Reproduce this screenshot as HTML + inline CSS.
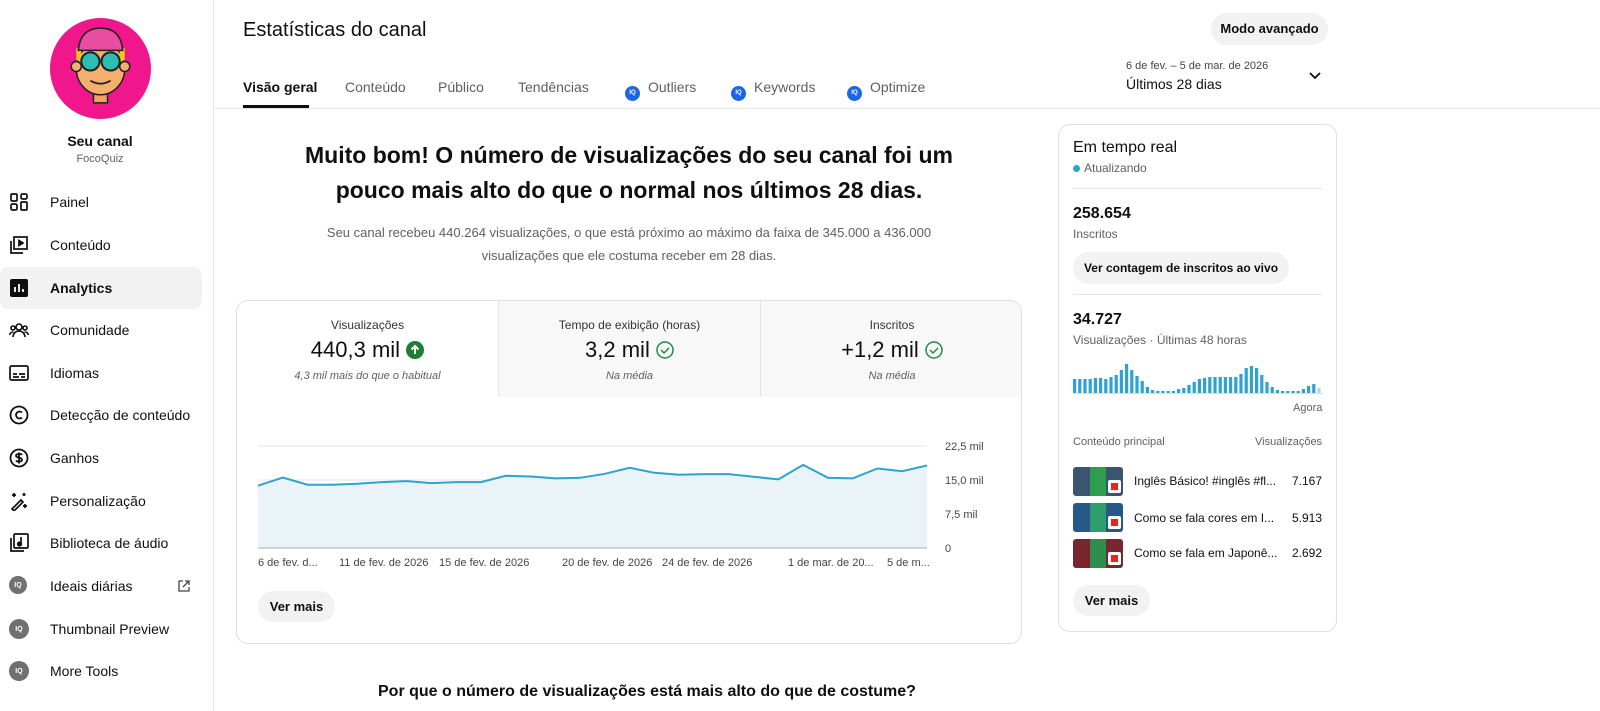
<!DOCTYPE html>
<html><head><meta charset="utf-8"><style>
*{margin:0;padding:0;box-sizing:border-box}
body{width:1600px;height:711px;overflow:hidden;background:#fff;font-family:"Liberation Sans",Arial,sans-serif;color:#0f0f0f;position:relative}
.abs{position:absolute}
.side{left:0;top:0;width:214px;height:711px;border-right:1px solid #e5e5e5}
.nav{position:absolute;left:0;width:202px;height:42px;display:flex;align-items:center;font-size:14px}
.nav .ic{position:absolute;left:9px;top:11px;width:20px;height:20px}
.nav span{position:absolute;left:50px;top:13px}
.iq{width:18px;height:18px;border-radius:50%;background:#707070;color:#fff;font-size:7px;font-weight:bold;display:flex;align-items:center;justify-content:center}
.tab{position:absolute;top:79px;font-size:14px;color:#606060}
.bq{display:inline-block;width:15px;height:15px;border-radius:50%;background:#1a66e8;color:#fff;font-size:6px;font-weight:bold;text-align:center;line-height:15px;vertical-align:-2px;margin-right:8px}
.btn{position:absolute;background:#f2f2f2;border-radius:18px;font-size:13px;font-weight:bold;color:#0f0f0f;text-align:center}
.m{position:absolute;top:0;height:96px;text-align:center}
.m .l{font-size:12px;color:#333;margin-top:17px}
.m .v{font-size:22px;margin-top:5px}
.m .s{font-size:11px;color:#606060;font-style:italic;margin-top:7px}
.small{font-size:12px;color:#606060}
</style></head><body>
<div class="abs side">
  <svg class="abs" style="left:50px;top:18px" width="101" height="101" viewBox="0 0 100 100">
    <circle cx="50" cy="50" r="50" fill="#f0168c"/>
    <rect x="43" y="70" width="14" height="14" fill="#f5a05a" stroke="#222" stroke-width="1.5"/>
    <ellipse cx="50" cy="50" rx="24" ry="26" fill="#f5b06f" stroke="#222" stroke-width="1.5"/>
    <circle cx="26" cy="48" r="5" fill="#f5b06f" stroke="#222" stroke-width="1.5"/>
    <circle cx="74" cy="48" r="5" fill="#f5b06f" stroke="#222" stroke-width="1.5"/>
    <rect x="26" y="30" width="5" height="12" fill="#f7c51a"/>
    <rect x="69" y="30" width="5" height="12" fill="#f7c51a"/>
    <path d="M28 32 Q30 10 50 10 Q70 10 72 32 Z" fill="#e94ca0" stroke="#222" stroke-width="1.5"/>
    <circle cx="40" cy="43" r="9" fill="#2bbfb3" stroke="#222" stroke-width="2"/>
    <circle cx="60" cy="43" r="9" fill="#2bbfb3" stroke="#222" stroke-width="2"/>
    <path d="M40 62 Q50 68 60 62" fill="none" stroke="#222" stroke-width="1.8"/>
  </svg>
  <div class="abs" style="left:0;width:200px;top:133px;text-align:center;font-size:14px;font-weight:bold">Seu canal</div>
  <div class="abs" style="left:0;width:200px;top:153px;text-align:center;font-size:11px;color:#606060">FocoQuiz</div>

  <div class="nav" style="top:181px"><svg class="ic" viewBox="0 0 20 20" fill="none" stroke="#0f0f0f" stroke-width="1.7"><rect x="2" y="2" width="6" height="7" rx="1"/><rect x="12" y="2" width="6" height="5" rx="1.5"/><rect x="2" y="12" width="6" height="6" rx="1.5"/><rect x="12" y="10" width="6" height="8" rx="1"/></svg><span>Painel</span></div>
  <div class="nav" style="top:224px"><svg class="ic" viewBox="0 0 20 20" fill="none" stroke="#0f0f0f" stroke-width="1.7"><rect x="5" y="2" width="13" height="12"/><path d="M2 6v12h12"/><path d="M10 5.5v5l4-2.5z" fill="#0f0f0f"/></svg><span>Conteúdo</span></div>
  <div class="nav" style="top:267px;background:#f2f2f2;border-radius:8px"><svg class="ic" viewBox="0 0 20 20"><rect x="1" y="1" width="18" height="18" rx="2" fill="#0f0f0f"/><path d="M6 14V9M10 14V6M14 14v-3" stroke="#fff" stroke-width="1.8"/></svg><span style="font-weight:bold">Analytics</span></div>
  <div class="nav" style="top:309px"><svg class="ic" viewBox="0 0 20 20" fill="none" stroke="#0f0f0f" stroke-width="1.6"><circle cx="10" cy="7" r="3"/><circle cx="4" cy="8" r="2"/><circle cx="16" cy="8" r="2"/><path d="M4 17a6 6 0 0 1 12 0M0.5 15a4 4 0 0 1 4-3M19.5 15a4 4 0 0 0-4-3"/></svg><span>Comunidade</span></div>
  <div class="nav" style="top:352px"><svg class="ic" viewBox="0 0 20 20" fill="none" stroke="#0f0f0f" stroke-width="1.7"><rect x="1" y="3" width="18" height="14" rx="1.5"/><path d="M4 11h4M10 11h6M4 14h6M12 14h4"/></svg><span>Idiomas</span></div>
  <div class="nav" style="top:394px"><svg class="ic" viewBox="0 0 20 20" fill="none" stroke="#0f0f0f" stroke-width="1.8"><circle cx="10" cy="10" r="8.5"/><path d="M13 7.5a3.5 3.5 0 1 0 0 5"/></svg><span>Detecção de conteúdo</span></div>
  <div class="nav" style="top:437px"><svg class="ic" viewBox="0 0 20 20" fill="none" stroke="#0f0f0f" stroke-width="1.8"><circle cx="10" cy="10" r="8.5"/><path d="M13 7c-1-1.5-6-1.5-6 .8s6 1.4 6 4c0 2.3-5 2.3-6 .7M10 4.5v11"/></svg><span>Ganhos</span></div>
  <div class="nav" style="top:480px"><svg class="ic" viewBox="0 0 20 20" fill="none" stroke="#0f0f0f" stroke-width="1.7"><path d="M3 18l9-9 2 2-9 9z"/><path d="M5 2v4M3 4h4M15 2v3M13.5 3.5h3M16 13v4M14 15h4"/></svg><span>Personalização</span></div>
  <div class="nav" style="top:522px"><svg class="ic" viewBox="0 0 20 20" fill="none" stroke="#0f0f0f" stroke-width="1.7"><rect x="5" y="1" width="14" height="14" rx="1"/><path d="M2 5v13h13"/><path d="M12 4v7"/><circle cx="10.5" cy="11" r="1.8" fill="#0f0f0f"/></svg><span>Biblioteca de áudio</span></div>
  <div class="nav" style="top:565px"><div class="ic iq" style="width:18px;height:18px">IQ</div><span>Ideais diárias</span><svg class="abs" style="left:177px;top:14px" width="14" height="14" viewBox="0 0 14 14" fill="none" stroke="#444" stroke-width="1.3"><path d="M6 2H2v10h10V8M8 2h4v4M12 2L6 8"/></svg></div>
  <div class="nav" style="top:608px"><div class="ic iq">IQ</div><span>Thumbnail Preview</span></div>
  <div class="nav" style="top:650px"><div class="ic iq">IQ</div><span>More Tools</span></div>
</div>

<div class="abs" style="left:243px;top:19px;font-size:20px">Estatísticas do canal</div>
<div class="btn" style="left:1211px;top:13px;width:117px;height:32px;line-height:32px">Modo avançado</div>
<div class="tab" style="left:243px;color:#0f0f0f;font-weight:bold">Visão geral</div>
<div class="abs" style="left:243px;top:105px;width:66px;height:3px;background:#0f0f0f"></div>
<div class="tab" style="left:345px">Conteúdo</div>
<div class="tab" style="left:438px">Público</div>
<div class="tab" style="left:518px">Tendências</div>
<div class="tab" style="left:625px"><span class="bq">IQ</span>Outliers</div>
<div class="tab" style="left:731px"><span class="bq">IQ</span>Keywords</div>
<div class="tab" style="left:847px"><span class="bq">IQ</span>Optimize</div>
<div class="abs" style="left:1126px;top:60px;font-size:11px;color:#444">6 de fev. – 5 de mar. de 2026</div>
<div class="abs" style="left:1126px;top:76px;font-size:14px">Últimos 28 dias</div>
<svg class="abs" style="left:1308px;top:71px" width="14" height="10" viewBox="0 0 14 10"><path d="M2 2l5 5 5-5" fill="none" stroke="#0f0f0f" stroke-width="1.8"/></svg>
<div class="abs" style="left:214px;top:108px;width:1386px;height:1px;background:#e5e5e5"></div>

<div class="abs" style="left:236px;width:786px;top:138px;text-align:center;font-size:23px;font-weight:bold;line-height:35px">Muito bom! O número de visualizações do seu canal foi um<br>pouco mais alto do que o normal nos últimos 28 dias.</div>
<div class="abs" style="left:236px;width:786px;top:221px;text-align:center;font-size:13px;color:#606060;line-height:23px">Seu canal recebeu 440.264 visualizações, o que está próximo ao máximo da faixa de 345.000 a 436.000<br>visualizações que ele costuma receber em 28 dias.</div>

<div class="abs" style="left:236px;top:300px;width:786px;height:344px;border:1px solid #e0e0e0;border-radius:12px;overflow:hidden">
  <div class="m" style="left:0;width:262px;border-right:1px solid #e5e5e5"><div class="l">Visualizações</div><div class="v">440,3 mil <svg width="18" height="18" viewBox="0 0 18 18" style="vertical-align:-2px"><circle cx="9" cy="9" r="9" fill="#1e7e34"/><path d="M9 13V5M5.5 8.5L9 5l3.5 3.5" stroke="#fff" stroke-width="2" fill="none"/></svg></div><div class="s">4,3 mil mais do que o habitual</div></div>
  <div class="m" style="left:262px;width:262px;background:#f8f8f8;border-right:1px solid #e5e5e5"><div class="l">Tempo de exibição (horas)</div><div class="v">3,2 mil <svg width="18" height="18" viewBox="0 0 18 18" style="vertical-align:-2px"><circle cx="9" cy="9" r="8" fill="none" stroke="#1e8e3e" stroke-width="1.5"/><path d="M5 9l3 3 5-5" stroke="#1e8e3e" stroke-width="1.5" fill="none"/></svg></div><div class="s">Na média</div></div>
  <div class="m" style="left:524px;width:262px;background:#f8f8f8"><div class="l">Inscritos</div><div class="v">+1,2 mil <svg width="18" height="18" viewBox="0 0 18 18" style="vertical-align:-2px"><circle cx="9" cy="9" r="8" fill="none" stroke="#1e8e3e" stroke-width="1.5"/><path d="M5 9l3 3 5-5" stroke="#1e8e3e" stroke-width="1.5" fill="none"/></svg></div><div class="s">Na média</div></div>
</div>
<svg class="abs" style="left:0;top:0" width="1600" height="711">
  <g stroke="#e6e6e6" stroke-width="1"><line x1="258" y1="446" x2="927" y2="446"/><line x1="258" y1="480" x2="927" y2="480"/><line x1="258" y1="514" x2="927" y2="514"/></g>
  <polygon fill="#eaf4f8" points="258,485.7 282.8,477.5 307.6,484.7 332.3,484.7 357.1,483.7 381.9,482.1 406.7,481.1 431.4,483.1 456.2,482.1 481,482.1 505.8,475.8 530.6,476.5 555.3,478.4 580.1,477.8 604.9,473.8 629.7,467.8 654.4,472.8 679.2,474.8 704,474.1 728.8,474.1 753.6,476.8 778.3,479.4 803.1,464.9 827.9,477.8 852.7,478.4 877.4,468.5 902.2,471.2 927,465.5 927,548 258,548"/>
  <polyline fill="none" stroke="#2ea3cf" stroke-width="2" points="258,485.7 282.8,477.5 307.6,484.7 332.3,484.7 357.1,483.7 381.9,482.1 406.7,481.1 431.4,483.1 456.2,482.1 481,482.1 505.8,475.8 530.6,476.5 555.3,478.4 580.1,477.8 604.9,473.8 629.7,467.8 654.4,472.8 679.2,474.8 704,474.1 728.8,474.1 753.6,476.8 778.3,479.4 803.1,464.9 827.9,477.8 852.7,478.4 877.4,468.5 902.2,471.2 927,465.5"/>
  <line x1="258" y1="548" x2="927" y2="548" stroke="#aaa"/>
  <g font-size="11" fill="#444" font-family="Liberation Sans"><text x="945" y="450">22,5 mil</text><text x="945" y="484">15,0 mil</text><text x="945" y="518">7,5 mil</text><text x="945" y="552">0</text>
  <text x="258" y="566">6 de fev. d...</text><text x="339" y="566">11 de fev. de 2026</text><text x="439" y="566">15 de fev. de 2026</text><text x="562" y="566">20 de fev. de 2026</text><text x="662" y="566">24 de fev. de 2026</text><text x="788" y="566">1 de mar. de 20...</text><text x="887" y="566">5 de m...</text></g>
</svg>
<div class="btn" style="left:258px;top:591px;width:77px;height:31px;line-height:31px">Ver mais</div>

<div class="abs" style="left:1058px;top:124px;width:279px;height:508px;border:1px solid #e0e0e0;border-radius:12px"></div>
<div class="abs" style="left:1073px;top:139px;font-size:16px">Em tempo real</div>
<div class="abs" style="left:1073px;top:161px;font-size:12px;color:#606060"><span style="display:inline-block;width:7px;height:7px;border-radius:50%;background:#2ea3cf;margin-right:4px"></span>Atualizando</div>
<div class="abs" style="left:1073px;top:188px;width:249px;height:1px;background:#e5e5e5"></div>
<div class="abs" style="left:1073px;top:205px;font-size:16px;font-weight:bold">258.654</div>
<div class="abs small" style="left:1073px;top:227px">Inscritos</div>
<div class="btn" style="left:1073px;top:252px;width:216px;height:32px;line-height:32px;font-size:12px">Ver contagem de inscritos ao vivo</div>
<div class="abs" style="left:1073px;top:294px;width:249px;height:1px;background:#e5e5e5"></div>
<div class="abs" style="left:1073px;top:311px;font-size:16px;font-weight:bold">34.727</div>
<div class="abs small" style="left:1073px;top:333px">Visualizações · Últimas 48 horas</div>
<svg class="abs" style="left:1073px;top:360px" width="250" height="36" id="bars"><g fill="#2ea3cf">
<rect x="0" y="19" width="3.2" height="14"/><rect x="5.2" y="19" width="3.2" height="14"/><rect x="10.4" y="19" width="3.2" height="14"/><rect x="15.6" y="19" width="3.2" height="14"/><rect x="20.8" y="18" width="3.2" height="15"/><rect x="26" y="18" width="3.2" height="15"/><rect x="31.2" y="19" width="3.2" height="14"/><rect x="36.4" y="17" width="3.2" height="16"/><rect x="41.6" y="15" width="3.2" height="18"/><rect x="46.8" y="10" width="3.2" height="23"/><rect x="52" y="4" width="3.2" height="29"/><rect x="57.2" y="10" width="3.2" height="23"/><rect x="62.4" y="16" width="3.2" height="17"/><rect x="67.6" y="21" width="3.2" height="12"/><rect x="72.8" y="27" width="3.2" height="6"/><rect x="78" y="30" width="3.2" height="3"/><rect x="83.2" y="31" width="3.2" height="2"/><rect x="88.4" y="31" width="3.2" height="2"/><rect x="93.6" y="31" width="3.2" height="2"/><rect x="98.8" y="31" width="3.2" height="2"/><rect x="104" y="29" width="3.2" height="4"/><rect x="109.2" y="28" width="3.2" height="5"/><rect x="114.4" y="25" width="3.2" height="8"/><rect x="119.6" y="22" width="3.2" height="11"/><rect x="124.8" y="19" width="3.2" height="14"/><rect x="130" y="18" width="3.2" height="15"/><rect x="135.2" y="17" width="3.2" height="16"/><rect x="140.4" y="17" width="3.2" height="16"/><rect x="145.6" y="17" width="3.2" height="16"/><rect x="150.8" y="17" width="3.2" height="16"/><rect x="156" y="17" width="3.2" height="16"/><rect x="161.2" y="17" width="3.2" height="16"/><rect x="166.4" y="14" width="3.2" height="19"/><rect x="171.6" y="8" width="3.2" height="25"/><rect x="176.8" y="6" width="3.2" height="27"/><rect x="182" y="8" width="3.2" height="25"/><rect x="187.2" y="15" width="3.2" height="18"/><rect x="192.4" y="22" width="3.2" height="11"/><rect x="197.6" y="27" width="3.2" height="6"/><rect x="202.8" y="30" width="3.2" height="3"/><rect x="208" y="31" width="3.2" height="2"/><rect x="213.2" y="31" width="3.2" height="2"/><rect x="218.4" y="31" width="3.2" height="2"/><rect x="223.6" y="31" width="3.2" height="2"/><rect x="228.8" y="29" width="3.2" height="4"/><rect x="234" y="26" width="3.2" height="7"/><rect x="239.2" y="24" width="3.2" height="9"/><rect x="244.4" y="28" width="3.2" height="5" fill="#a8d8ea"/>
</g><line x1="0" y1="33.5" x2="250" y2="33.5" stroke="#ddd"/></svg>
<div class="abs small" style="left:1293px;top:402px;font-size:11px">Agora</div>
<div class="abs small" style="left:1073px;top:436px;font-size:11px">Conteúdo principal</div>
<div class="abs small" style="left:1255px;top:436px;font-size:11px">Visualizações</div>
<div class="abs" style="left:1073px;top:467px;width:50px;height:29px;border-radius:3px;background:#3b5570"><div style="position:absolute;left:17px;top:0;width:16px;height:29px;background:#2e9e4e"></div><div style="position:absolute;left:35px;top:13px;width:13px;height:13px;background:#fff;border-radius:2px;border:3px solid #fff;background:#e22"></div></div>
<div class="abs" style="left:1134px;top:474px;font-size:12px">Inglês Básico! #inglês #fl...</div>
<div class="abs" style="left:1292px;top:474px;font-size:12px">7.167</div>
<div class="abs" style="left:1073px;top:503px;width:50px;height:29px;border-radius:3px;background:#27588a"><div style="position:absolute;left:17px;top:0;width:16px;height:29px;background:#2e9e6e"></div><div style="position:absolute;left:35px;top:13px;width:13px;height:13px;border-radius:2px;border:3px solid #fff;background:#e22"></div></div>
<div class="abs" style="left:1134px;top:511px;font-size:12px">Como se fala cores em I...</div>
<div class="abs" style="left:1292px;top:511px;font-size:12px">5.913</div>
<div class="abs" style="left:1073px;top:539px;width:50px;height:29px;border-radius:3px;background:#7a2630"><div style="position:absolute;left:17px;top:0;width:16px;height:29px;background:#2e8e4e"></div><div style="position:absolute;left:35px;top:13px;width:13px;height:13px;border-radius:2px;border:3px solid #fff;background:#e22"></div></div>
<div class="abs" style="left:1134px;top:546px;font-size:12px">Como se fala em Japonê...</div>
<div class="abs" style="left:1292px;top:546px;font-size:12px">2.692</div>
<div class="btn" style="left:1073px;top:585px;width:77px;height:31px;line-height:31px">Ver mais</div>

<div class="abs" style="left:378px;top:683px;font-size:16px;font-weight:bold">Por que o número de visualizações está mais alto do que de costume?</div>
</body></html>
